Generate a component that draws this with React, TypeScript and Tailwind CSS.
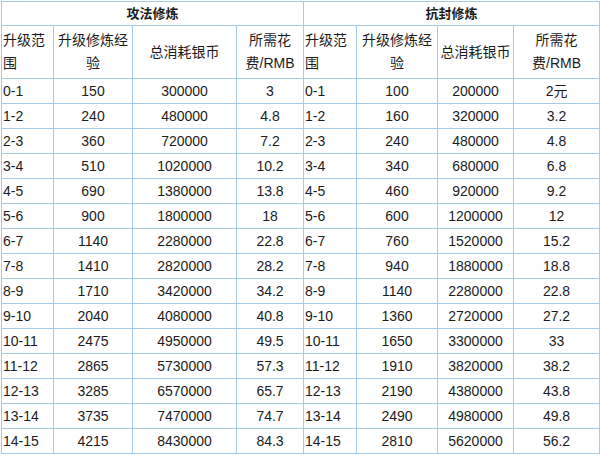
import React from "react";

const left: string[][] = [
  ["0-1", "150", "300000", "3"],
  ["1-2", "240", "480000", "4.8"],
  ["2-3", "360", "720000", "7.2"],
  ["3-4", "510", "1020000", "10.2"],
  ["4-5", "690", "1380000", "13.8"],
  ["5-6", "900", "1800000", "18"],
  ["6-7", "1140", "2280000", "22.8"],
  ["7-8", "1410", "2820000", "28.2"],
  ["8-9", "1710", "3420000", "34.2"],
  ["9-10", "2040", "4080000", "40.8"],
  ["10-11", "2475", "4950000", "49.5"],
  ["11-12", "2865", "5730000", "57.3"],
  ["12-13", "3285", "6570000", "65.7"],
  ["13-14", "3735", "7470000", "74.7"],
  ["14-15", "4215", "8430000", "84.3"],
];
const right: string[][] = [
  ["0-1", "100", "200000", "2元"],
  ["1-2", "160", "320000", "3.2"],
  ["2-3", "240", "480000", "4.8"],
  ["3-4", "340", "680000", "6.8"],
  ["4-5", "460", "920000", "9.2"],
  ["5-6", "600", "1200000", "12"],
  ["6-7", "760", "1520000", "15.2"],
  ["7-8", "940", "1880000", "18.8"],
  ["8-9", "1140", "2280000", "22.8"],
  ["9-10", "1360", "2720000", "27.2"],
  ["10-11", "1650", "3300000", "33"],
  ["11-12", "1910", "3820000", "38.2"],
  ["12-13", "2190", "4380000", "43.8"],
  ["13-14", "2490", "4980000", "49.8"],
  ["14-15", "2810", "5620000", "56.2"],
];

const font = { fontFamily: '"Liberation Sans", "Noto Sans CJK SC", Arial, sans-serif' };
const bd = "border border-[#a6cbea]";

export default function App() {
  return (
    <div className="w-[600px] h-[456px] bg-white pl-[1px] pt-[1px]" style={font}>
      <table className="border-collapse table-fixed w-[598px] text-[14px] text-[#1c1c1c]">
        <colgroup>
          <col className="w-[52px]" />
          <col className="w-[79px]" />
          <col className="w-[104px]" />
          <col className="w-[67px]" />
          <col className="w-[53px]" />
          <col className="w-[81px]" />
          <col className="w-[76px]" />
          <col className="w-[86px]" />
        </colgroup>
        <tbody>
          <tr className="h-[24px]">
            <td colSpan={4} className={`${bd} p-0 text-center font-bold text-[13px]`}>攻法修炼</td>
            <td colSpan={4} className={`${bd} p-0 text-center font-bold text-[13px]`}>抗封修炼</td>
          </tr>
          <tr className="h-[53px]">
            {[0, 1].map((k) => (
              <React.Fragment key={k}>
                <td className={`${bd} p-0 pl-[1px] leading-[23px] text-left`}>升级范围</td>
                <td className={`${bd} p-0 leading-[23px] text-center`}>升级修炼经验</td>
                <td className={`${bd} p-0 leading-[23px] text-center`}>总消耗银币</td>
                <td className={`${bd} p-0 px-[6px] leading-[23px] text-center`}>所需花费/RMB</td>
              </React.Fragment>
            ))}
          </tr>
          {left.map((l, i) => {
            const r = right[i];
            return (
              <tr key={i} className="h-[25px]">
                <td className={`${bd} p-0 pl-[1px] text-left`}>{l[0]}</td>
                <td className={`${bd} p-0 text-center`}>{l[1]}</td>
                <td className={`${bd} p-0 text-center`}>{l[2]}</td>
                <td className={`${bd} p-0 text-center`}>{l[3]}</td>
                <td className={`${bd} p-0 pl-[1px] text-left`}>{r[0]}</td>
                <td className={`${bd} p-0 text-center`}>{r[1]}</td>
                <td className={`${bd} p-0 text-center`}>{r[2]}</td>
                <td className={`${bd} p-0 text-center`}>{r[3]}</td>
              </tr>
            );
          })}
        </tbody>
      </table>
    </div>
  );
}
